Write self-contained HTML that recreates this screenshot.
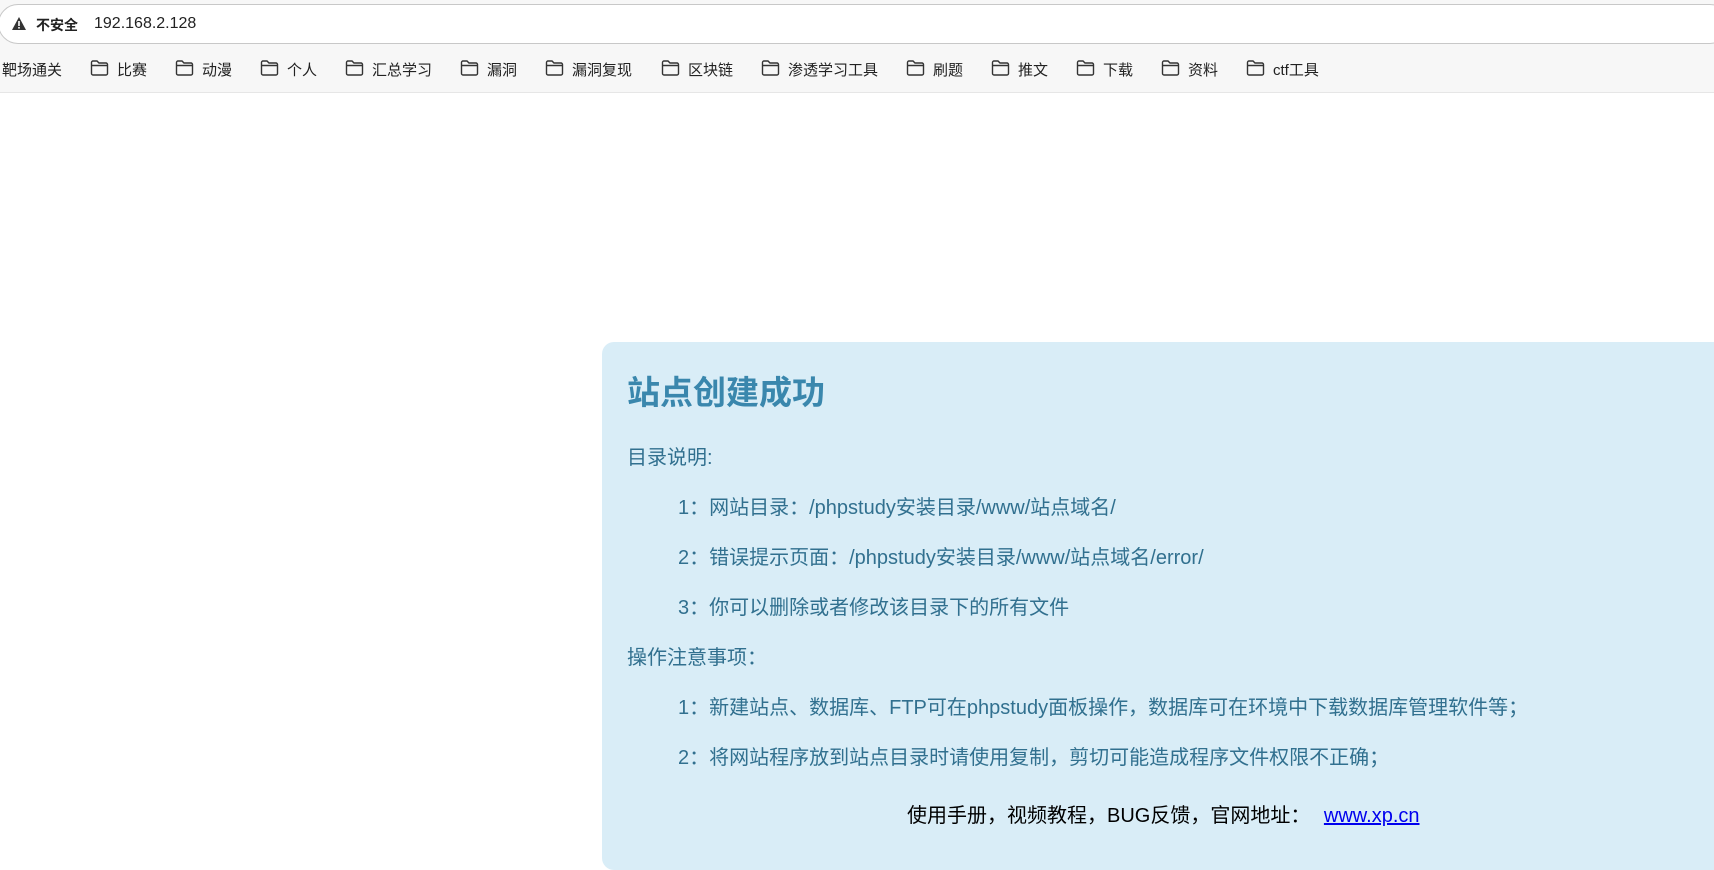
<!DOCTYPE html>
<html><head><meta charset="utf-8"><style>
html,body{margin:0;width:1714px;height:870px;overflow:hidden}
body{background:#fff;font-family:"Liberation Sans","Noto Sans CJK SC",sans-serif;position:relative}
.top{position:absolute;left:0;top:0;width:1714px;height:92px;background:#f7f7f7;border-bottom:1px solid #e6e6e6}
.addr{position:absolute;left:-2px;top:4px;width:1730px;height:38px;background:#fff;border:1px solid #c8c8c8;border-radius:20px}
.warn{position:absolute;left:13px;top:12px}
.ns{position:absolute;left:37px;top:10px;font-size:14px;font-weight:bold;color:#222}
.url{position:absolute;left:95px;top:10px;font-size:16px;color:#222}
.bm{position:absolute;top:59px;font-size:15px;color:#222;white-space:nowrap}
.bm svg{position:absolute;left:-27px;top:0px}
.card{position:absolute;left:602px;top:342px;width:1200px;height:528px;background:#d9edf7;border-radius:12px;color:#31708f;font-size:20px}
.card h1{position:absolute;left:25px;top:24px;margin:0;font-size:33px;color:#3a87ad;font-weight:bold}
.l{position:absolute;white-space:nowrap}
.f{position:absolute;left:305px;top:457px;color:#000;font-size:20px;white-space:nowrap}
.f a{color:#00e;margin-left:8px;text-decoration:underline}
</style></head><body>
<div class="top">
<div class="addr">
<svg class="warn" width="14" height="13" viewBox="0 0 14 13"><path d="M7 0L14 13H0Z" fill="#333"/><rect x="6.2" y="4" width="1.6" height="5" fill="#fff"/><rect x="6.2" y="10" width="1.6" height="1.6" fill="#fff"/></svg>
<span class="ns">不安全</span><span class="url">192.168.2.128</span>
</div>
<span class="bm" style="left:2px">靶场通关</span>
<span class="bm" style="left:117px"><svg width="19" height="18" viewBox="0 0 19 18"><path d="M1.5 3.5a1.5 1.5 0 0 1 1.5-1.5h4l2 2h7a1.5 1.5 0 0 1 1.5 1.5v9a1.5 1.5 0 0 1-1.5 1.5h-13a1.5 1.5 0 0 1-1.5-1.5z M1.5 6.5h16" fill="none" stroke="#333" stroke-width="1.4"/></svg>比赛</span>
<span class="bm" style="left:202px"><svg width="19" height="18" viewBox="0 0 19 18"><path d="M1.5 3.5a1.5 1.5 0 0 1 1.5-1.5h4l2 2h7a1.5 1.5 0 0 1 1.5 1.5v9a1.5 1.5 0 0 1-1.5 1.5h-13a1.5 1.5 0 0 1-1.5-1.5z M1.5 6.5h16" fill="none" stroke="#333" stroke-width="1.4"/></svg>动漫</span>
<span class="bm" style="left:287px"><svg width="19" height="18" viewBox="0 0 19 18"><path d="M1.5 3.5a1.5 1.5 0 0 1 1.5-1.5h4l2 2h7a1.5 1.5 0 0 1 1.5 1.5v9a1.5 1.5 0 0 1-1.5 1.5h-13a1.5 1.5 0 0 1-1.5-1.5z M1.5 6.5h16" fill="none" stroke="#333" stroke-width="1.4"/></svg>个人</span>
<span class="bm" style="left:372px"><svg width="19" height="18" viewBox="0 0 19 18"><path d="M1.5 3.5a1.5 1.5 0 0 1 1.5-1.5h4l2 2h7a1.5 1.5 0 0 1 1.5 1.5v9a1.5 1.5 0 0 1-1.5 1.5h-13a1.5 1.5 0 0 1-1.5-1.5z M1.5 6.5h16" fill="none" stroke="#333" stroke-width="1.4"/></svg>汇总学习</span>
<span class="bm" style="left:487px"><svg width="19" height="18" viewBox="0 0 19 18"><path d="M1.5 3.5a1.5 1.5 0 0 1 1.5-1.5h4l2 2h7a1.5 1.5 0 0 1 1.5 1.5v9a1.5 1.5 0 0 1-1.5 1.5h-13a1.5 1.5 0 0 1-1.5-1.5z M1.5 6.5h16" fill="none" stroke="#333" stroke-width="1.4"/></svg>漏洞</span>
<span class="bm" style="left:572px"><svg width="19" height="18" viewBox="0 0 19 18"><path d="M1.5 3.5a1.5 1.5 0 0 1 1.5-1.5h4l2 2h7a1.5 1.5 0 0 1 1.5 1.5v9a1.5 1.5 0 0 1-1.5 1.5h-13a1.5 1.5 0 0 1-1.5-1.5z M1.5 6.5h16" fill="none" stroke="#333" stroke-width="1.4"/></svg>漏洞复现</span>
<span class="bm" style="left:688px"><svg width="19" height="18" viewBox="0 0 19 18"><path d="M1.5 3.5a1.5 1.5 0 0 1 1.5-1.5h4l2 2h7a1.5 1.5 0 0 1 1.5 1.5v9a1.5 1.5 0 0 1-1.5 1.5h-13a1.5 1.5 0 0 1-1.5-1.5z M1.5 6.5h16" fill="none" stroke="#333" stroke-width="1.4"/></svg>区块链</span>
<span class="bm" style="left:788px"><svg width="19" height="18" viewBox="0 0 19 18"><path d="M1.5 3.5a1.5 1.5 0 0 1 1.5-1.5h4l2 2h7a1.5 1.5 0 0 1 1.5 1.5v9a1.5 1.5 0 0 1-1.5 1.5h-13a1.5 1.5 0 0 1-1.5-1.5z M1.5 6.5h16" fill="none" stroke="#333" stroke-width="1.4"/></svg>渗透学习工具</span>
<span class="bm" style="left:933px"><svg width="19" height="18" viewBox="0 0 19 18"><path d="M1.5 3.5a1.5 1.5 0 0 1 1.5-1.5h4l2 2h7a1.5 1.5 0 0 1 1.5 1.5v9a1.5 1.5 0 0 1-1.5 1.5h-13a1.5 1.5 0 0 1-1.5-1.5z M1.5 6.5h16" fill="none" stroke="#333" stroke-width="1.4"/></svg>刷题</span>
<span class="bm" style="left:1018px"><svg width="19" height="18" viewBox="0 0 19 18"><path d="M1.5 3.5a1.5 1.5 0 0 1 1.5-1.5h4l2 2h7a1.5 1.5 0 0 1 1.5 1.5v9a1.5 1.5 0 0 1-1.5 1.5h-13a1.5 1.5 0 0 1-1.5-1.5z M1.5 6.5h16" fill="none" stroke="#333" stroke-width="1.4"/></svg>推文</span>
<span class="bm" style="left:1103px"><svg width="19" height="18" viewBox="0 0 19 18"><path d="M1.5 3.5a1.5 1.5 0 0 1 1.5-1.5h4l2 2h7a1.5 1.5 0 0 1 1.5 1.5v9a1.5 1.5 0 0 1-1.5 1.5h-13a1.5 1.5 0 0 1-1.5-1.5z M1.5 6.5h16" fill="none" stroke="#333" stroke-width="1.4"/></svg>下载</span>
<span class="bm" style="left:1188px"><svg width="19" height="18" viewBox="0 0 19 18"><path d="M1.5 3.5a1.5 1.5 0 0 1 1.5-1.5h4l2 2h7a1.5 1.5 0 0 1 1.5 1.5v9a1.5 1.5 0 0 1-1.5 1.5h-13a1.5 1.5 0 0 1-1.5-1.5z M1.5 6.5h16" fill="none" stroke="#333" stroke-width="1.4"/></svg>资料</span>
<span class="bm" style="left:1273px"><svg width="19" height="18" viewBox="0 0 19 18"><path d="M1.5 3.5a1.5 1.5 0 0 1 1.5-1.5h4l2 2h7a1.5 1.5 0 0 1 1.5 1.5v9a1.5 1.5 0 0 1-1.5 1.5h-13a1.5 1.5 0 0 1-1.5-1.5z M1.5 6.5h16" fill="none" stroke="#333" stroke-width="1.4"/></svg>ctf工具</span>
</div>
<div class="card">
<h1>站点创建成功</h1>
<div class="l" style="left:25px;top:99px">目录说明:</div>
<div class="l" style="left:76px;top:149px">1：网站目录：/phpstudy安装目录/www/站点域名/</div>
<div class="l" style="left:76px;top:199px">2：错误提示页面：/phpstudy安装目录/www/站点域名/error/</div>
<div class="l" style="left:76px;top:249px">3：你可以删除或者修改该目录下的所有文件</div>
<div class="l" style="left:25px;top:299px">操作注意事项：</div>
<div class="l" style="left:76px;top:349px">1：新建站点、数据库、FTP可在phpstudy面板操作，数据库可在环境中下载数据库管理软件等；</div>
<div class="l" style="left:76px;top:399px">2：将网站程序放到站点目录时请使用复制，剪切可能造成程序文件权限不正确；</div>
<div class="f">使用手册，视频教程，BUG反馈，官网地址： <a>www.xp.cn</a></div>
</div>
</body></html>
